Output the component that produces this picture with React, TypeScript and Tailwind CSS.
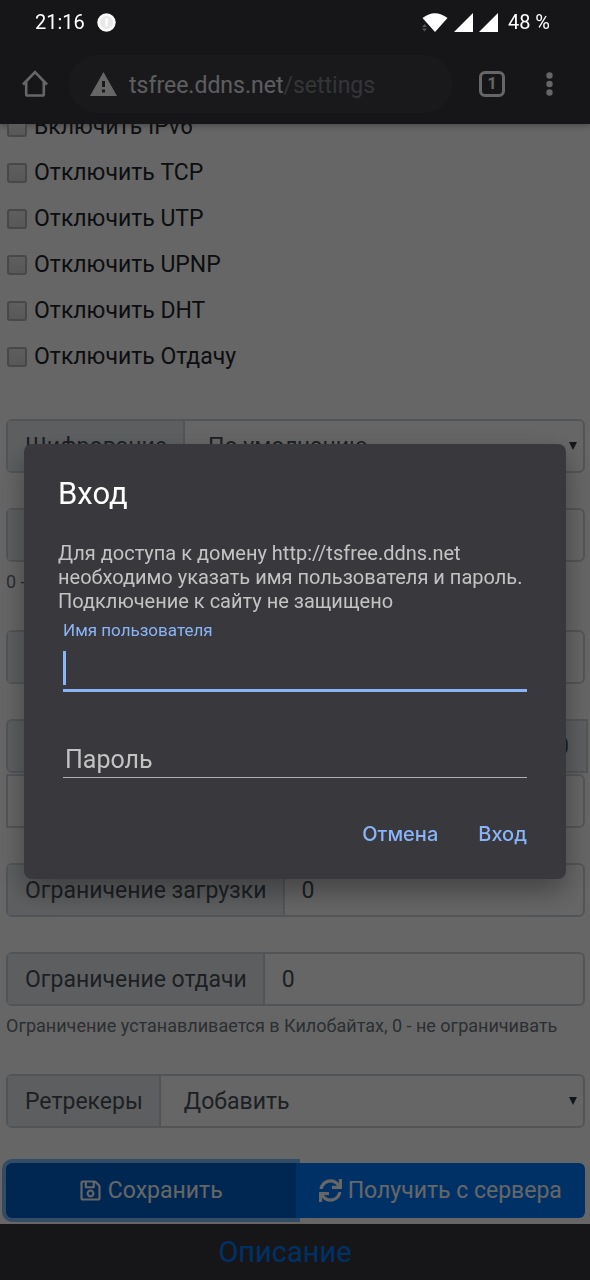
import type { ReactNode } from "react";
import { FaRegSave, FaSync } from "react-icons/fa";

const toggles = [
    { id: "ipv6", label: "Включить IPv6" },
    { id: "tcp", label: "Отключить TCP" },
    { id: "utp", label: "Отключить UTP" },
    { id: "upnp", label: "Отключить UPNP" },
    { id: "dht", label: "Отключить DHT" },
    { id: "upload", label: "Отключить Отдачу" },
];

function StatusBar() {
    return (
        <div className="relative z-20 flex h-11 shrink-0 items-center justify-between pl-[35px] pr-10 text-xl text-white">
            <div className="flex items-center gap-3">
                <span>21:16</span>
                <svg className="size-[19px]" viewBox="0 0 19 19">
                    <circle cx="9.5" cy="9.5" r="9.2" fill="#fafafa" />
                    <circle cx="9.5" cy="9.5" r="6.5" fill="#e8e8e8" />
                    <path d="M8.5 5.5h2.500l-.6 8H8.500z" fill="#fff" />
                </svg>
            </div>
            <div className="flex items-center gap-[6px]">
                <svg className="h-[19px] w-[26px]" viewBox="0 0 26 19">
                    <path d="M.5 5Q13-4.500 25.500 5L13 19z" fill="#fff" />
                    <path d="M0 14l2.500-3 2.500 3zM0 15.500l2.500 3 2.500-3z" fill="#555" />
                </svg>
                <svg className="size-[19px]" viewBox="0 0 19 19">
                    <path d="M19 0v19H0z" fill="#fff" />
                </svg>
                <svg className="size-[19px]" viewBox="0 0 19 19">
                    <path d="M19 0v19H0z" fill="#fff" />
                </svg>
                <span className="pl-1">48 %</span>
            </div>
        </div>
    );
}

function Toolbar() {
    return (
        <div className="flex h-20 shrink-0 items-center pl-[21px] pr-[37px]">
            <button aria-label="Домой">
                <svg className="size-7" viewBox="0 0 28 28" fill="none" stroke="#fff" strokeWidth="2.600">
                    <path d="M2 14.500L14 2.200l12 12.300M5.200 12v12.200q0 1.300 1.300 1.300h15q1.300 0 1.300-1.300V12" />
                </svg>
            </button>
            <div className="ml-5 mr-[27px] flex h-[58px] min-w-0 flex-1 items-center gap-3 rounded-full bg-[#3f4044] pl-[21px] text-[23px]">
                <svg className="h-6 w-[27px] shrink-0" viewBox="0 0 27 24">
                    <path
                        fill="#fff"
                        fillRule="evenodd"
                        d="M13.500 0L27 24H0zM12 9v6h3V9zm0 8.500v3h3v-3z"
                    />
                </svg>
                <span className="truncate pt-1 text-[#80868b]">
                    <span className="text-[#e8eaed]">tsfree.ddns.net</span>/settings
                </span>
            </div>
            <button
                aria-label="Вкладки"
                className="flex size-[26px] items-center justify-center rounded-md border-[3px] border-white text-base font-bold text-white"
            >
                1
            </button>
            <button aria-label="Меню" className="ml-[41px]">
                <svg className="h-6 w-[7px]" viewBox="0 0 7 24" fill="#fff">
                    <circle cx="3.500" cy="3.500" r="3.200" />
                    <circle cx="3.500" cy="12" r="3.200" />
                    <circle cx="3.500" cy="20.500" r="3.200" />
                </svg>
            </button>
        </div>
    );
}

function Group({ id, label, children }: { id: string; label: string; children: ReactNode }) {
    return (
        <div className="flex h-[54px] rounded-md border-2 border-[#ced4da]">
            <label
                htmlFor={id}
                className="flex min-w-32 shrink-0 items-center border-r-2 border-[#ced4da] bg-[#e9ecef] pl-[17px] pr-4 pt-0.5 text-[#495057]"
            >
                {label}
            </label>
            {children}
        </div>
    );
}

function NumberBox({ id, value = "" }: { id: string; value?: string }) {
    return (
        <input
            id={id}
            defaultValue={value}
            className="min-w-0 flex-1 bg-transparent px-[17px] pt-0.5 text-[#495057] outline-none"
        />
    );
}

function SelectBox({ id, value }: { id: string; value: string }) {
    return (
        <div className="relative flex min-w-0 flex-1">
            <select
                id={id}
                className="w-full appearance-none bg-transparent px-[23px] pt-0.5 text-[#495057] outline-none"
            >
                <option>{value}</option>
            </select>
            <svg className="pointer-events-none absolute right-1.5 top-1/2 size-2 -translate-y-1/2" viewBox="0 0 8 8">
                <path d="M0 0h8L4 8z" fill="#343a40" />
            </svg>
        </div>
    );
}

function Settings() {
    return (
        <form className="shrink-0 pb-1.5 pl-1.5 pr-[5px] text-[23px] text-[#212529]">
            <div className="mb-10 pl-px">
                {toggles.map((item) => (
                    <div key={item.id} className="flex h-[46px] items-center gap-[7px]">
                        <input
                            id={item.id}
                            type="checkbox"
                            className="mt-0.5 size-5 appearance-none rounded-[3px] border-2 border-[#b4b4b4] bg-linear-to-b from-[#ececec] to-[#dcdcdc]"
                        />
                        <label htmlFor={item.id} className="pt-0.5">
                            {item.label}
                        </label>
                    </div>
                ))}
            </div>

            <div className="flex flex-col gap-[35px]">
                <Group id="encryption" label="Шифрование">
                    <SelectBox id="encryption" value="По умолчанию" />
                </Group>
                <div>
                    <Group id="connections" label="">
                        <NumberBox id="connections" />
                    </Group>
                    <p className="mt-1.5 text-lg leading-[27px] text-[#6c757d]">0 -</p>
                </div>
                <Group id="dht-limit" label="">
                    <NumberBox id="dht-limit" />
                </Group>
                <div className="flex flex-col gap-px">
                    <label
                        htmlFor="port"
                        className="-mr-[3px] flex h-[54px] items-center justify-end rounded-l-md border-2 border-[#ced4da] bg-[#e9ecef] px-[17px] pt-0.5 text-[#495057]"
                    >
                        0
                    </label>
                    <input id="port" className="h-[54px] rounded-r-md border-2 border-[#ced4da] px-[17px] outline-none" />
                </div>
                <Group id="download-rate" label="Ограничение загрузки">
                    <NumberBox id="download-rate" value="0" />
                </Group>
                <div>
                    <Group id="upload-rate" label="Ограничение отдачи">
                        <NumberBox id="upload-rate" value="0" />
                    </Group>
                    <p className="mt-1.5 text-lg leading-[27px] text-[#6c757d]">
                        Ограничение устанавливается в Килобайтах, 0 - не ограничивать
                    </p>
                </div>
                <Group id="retrackers" label="Ретрекеры">
                    <SelectBox id="retrackers" value="Добавить" />
                </Group>
                <div className="flex h-[55px] text-white">
                    <button
                        type="button"
                        className="flex flex-1 items-center justify-center gap-1.5 rounded-l-md bg-[#0062cc] ring-4 ring-[#80bdff]"
                    >
                        <FaRegSave />
                        <span className="pt-0.5">Сохранить</span>
                    </button>
                    <button type="button" className="flex flex-1 items-center justify-center gap-1.5 rounded-r-md bg-[#007bff]">
                        <FaSync />
                        <span className="pt-0.5">Получить с сервера</span>
                    </button>
                </div>
            </div>
        </form>
    );
}

function LoginDialog() {
    return (
        <div className="fixed inset-0 z-10 flex items-center justify-center bg-black/60 px-6 pt-[43px]">
            <div
                role="dialog"
                aria-labelledby="login-title"
                className="w-full max-w-[543px] rounded-lg bg-[#39383c] px-[34px] pb-[33px] pt-[30px] shadow-[0_12px_28px_rgba(0,0,0,0.35)]"
            >
                <h1 id="login-title" className="pt-px text-[31px] leading-[38px] text-white">
                    Вход
                </h1>
                <p className="mt-7 text-xl leading-6 text-[#c3c3c4]">
                    Для доступа к домену http://tsfree.ddns.net необходимо указать имя пользователя и пароль. Подключение к
                    сайту не защищено
                </p>
                <form className="mx-[5px] mt-[7px]">
                    <label htmlFor="login" className="block text-[17px] leading-5 text-[#8ab4f8]">
                        Имя пользователя
                    </label>
                    <div className="relative">
                        <input
                            id="login"
                            className="block h-[52px] w-full border-b-[3px] border-[#8ab4f8] text-2xl text-white caret-transparent outline-none"
                        />
                        <span className="absolute left-0 top-[11px] h-[34px] w-[3px] bg-[#8ab4f8]" />
                    </div>
                    <input
                        type="password"
                        aria-label="Пароль"
                        placeholder="Пароль"
                        className="mt-12 block h-[38px] w-full border-b border-[#b0b0b2] px-0.5 pt-0.5 text-[25px] text-white outline-none placeholder:text-[#c3c3c4]"
                    />
                    <div className="mt-11 flex justify-end gap-10 font-[Inter,sans-serif] text-xl leading-6 font-medium text-[#8ab4f8]">
                        <button type="button">Отмена</button>
                        <button type="submit">Вход</button>
                    </div>
                </form>
            </div>
        </div>
    );
}

export default function App() {
    return (
        <div className="flex h-screen flex-col overflow-hidden bg-white font-[Roboto,sans-serif]">
            <header className="shrink-0 bg-[#37393e] shadow-[0_2px_6px_rgba(0,0,0,0.3)]">
                <StatusBar />
                <Toolbar />
            </header>
            {/* scrolled down to the last row of the form */}
            <main className="flex min-h-0 flex-1 flex-col justify-end overflow-hidden">
                <Settings />
            </main>
            <footer className="flex h-14 shrink-0 items-center justify-center bg-[#37393e] pr-5 pt-0.5 text-[29px]">
                <a href="#about" className="text-[#007bff]">
                    Описание
                </a>
            </footer>
            <LoginDialog />
        </div>
    );
}
